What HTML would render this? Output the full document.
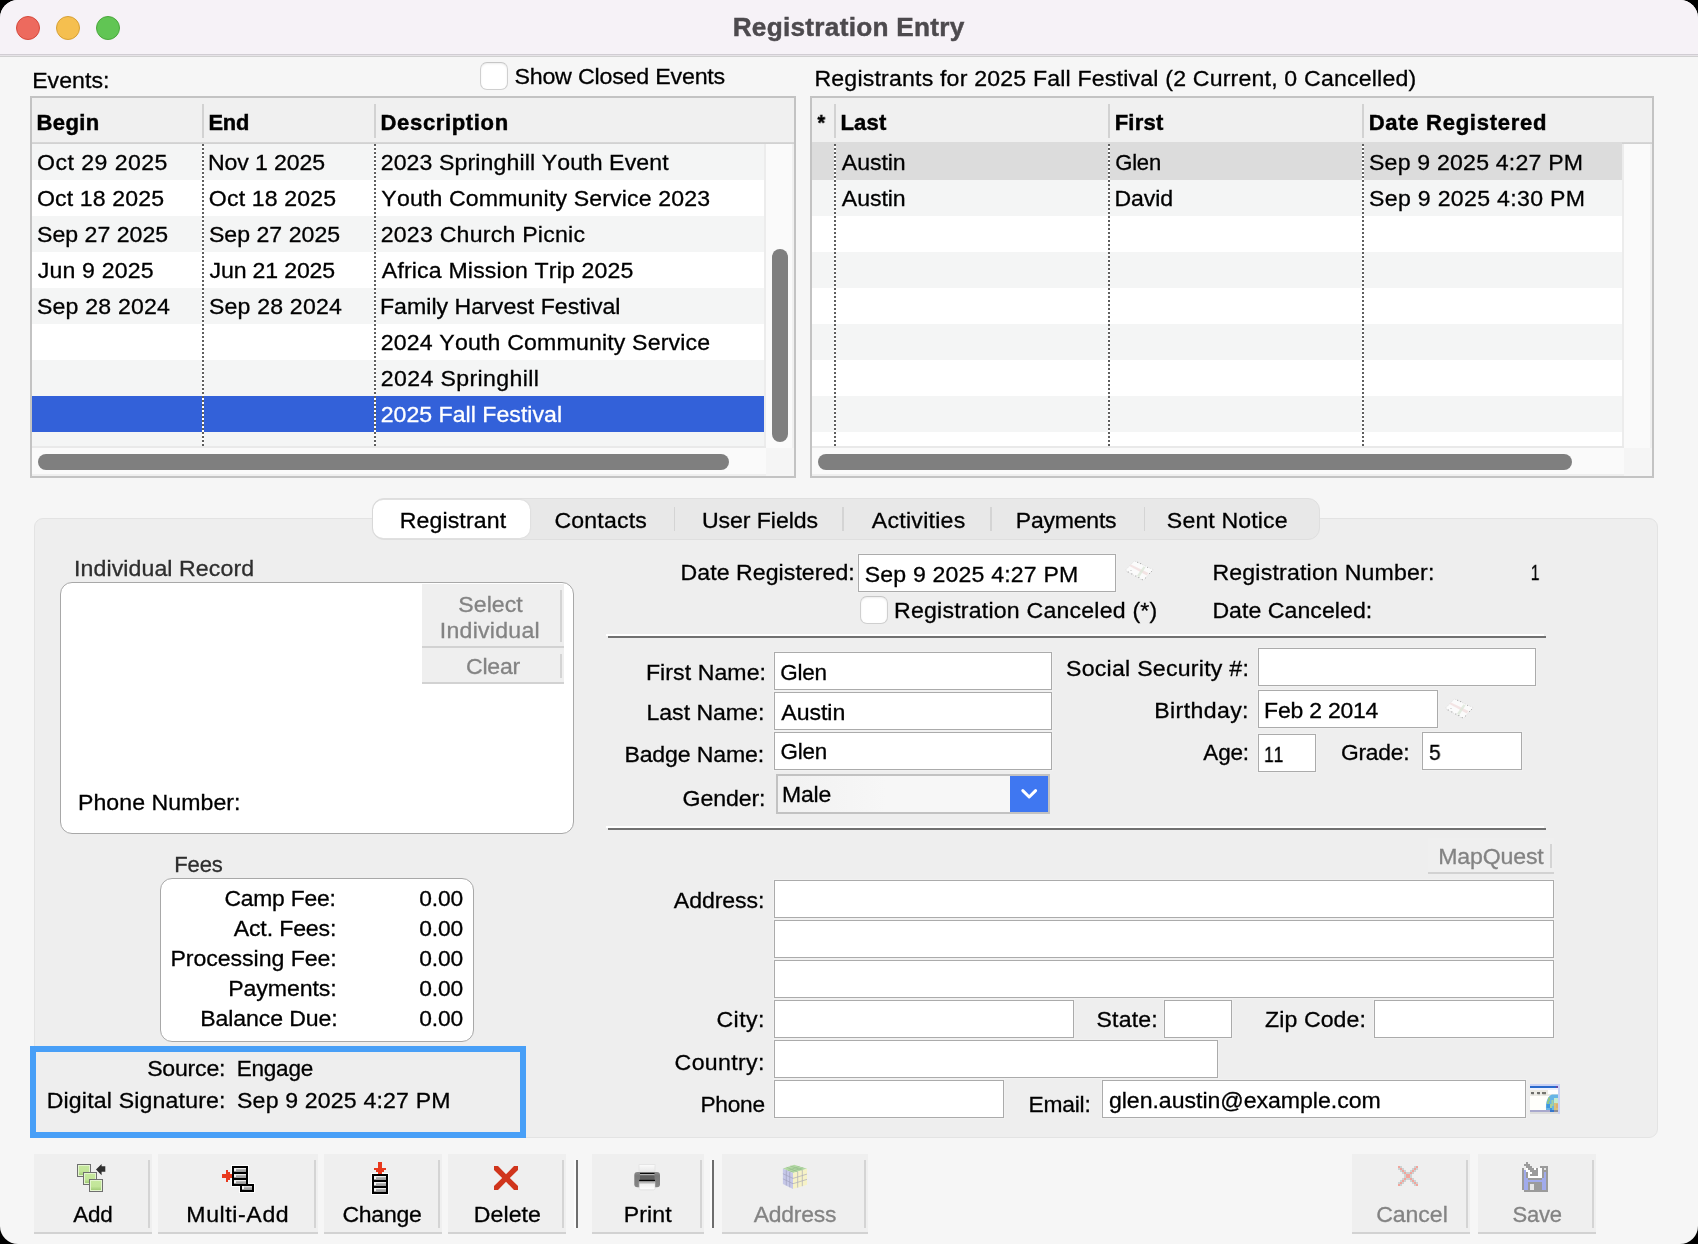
<!DOCTYPE html><html><head><meta charset="utf-8"><title>Registration Entry</title><style>
html,body{margin:0;padding:0;background:#000;}
body{width:1698px;height:1244px;overflow:hidden;position:relative;font-family:"Liberation Sans", sans-serif;}
#win{position:absolute;left:0;top:0;width:1698px;height:1244px;background:#f6f6f6;border-radius:18px;overflow:hidden;}
#win div,#win span,#win svg{position:absolute;box-sizing:border-box;}
#win span{display:block;-webkit-text-stroke:0.3px;will-change:transform;white-space:pre;line-height:1;font-kerning:none;transform-origin:0 0;}

</style></head><body><div id="win">
<div style="left:0;top:0;width:1698px;height:54px;background:#f6f2f7;"></div>
<div style="left:0;top:54px;width:1698px;height:1px;background:#d1cdd3;"></div>
<div style="left:0;top:55px;width:1698px;height:1px;background:#e6e3e7;"></div>
<div style="left:0;top:56px;width:1698px;height:1px;background:#d0d0d0;"></div>
<div style="left:16px;top:16px;width:24px;height:24px;border-radius:50%;background:#ed6a5e;border:1px solid #d5493c;"></div>
<div style="left:56px;top:16px;width:24px;height:24px;border-radius:50%;background:#f5bf4f;border:1px solid #d6a035;"></div>
<div style="left:96px;top:16px;width:24px;height:24px;border-radius:50%;background:#61c554;border:1px solid #4aa73c;"></div>
<div style="left:30px;top:96px;width:766px;height:382px;background:#fff;border:2px solid #c3c3c3;"></div>
<div style="left:32px;top:98px;width:762px;height:44px;background:#f0f0f0;"></div>
<div style="left:32px;top:142px;width:762px;height:2px;background:linear-gradient(to bottom,#d9d9d9,#cfcfcf);"></div>
<div style="left:32px;top:144px;width:732px;height:36px;background:#f4f5f5;"></div>
<div style="left:32px;top:216px;width:732px;height:36px;background:#f4f5f5;"></div>
<div style="left:32px;top:288px;width:732px;height:36px;background:#f4f5f5;"></div>
<div style="left:32px;top:360px;width:732px;height:36px;background:#f4f5f5;"></div>
<div style="left:32px;top:396px;width:732px;height:36px;background:#3361d9;"></div>
<div style="left:32px;top:432px;width:732px;height:14px;background:#f4f5f5;"></div>
<div style="left:764px;top:144px;width:30px;height:304px;background:#fafafa;border-left:2px solid #ececec;border-right:2px solid #f0f0f0;"></div>
<div style="left:32px;top:446px;width:734px;height:30px;background:#fafafa;border-top:2px solid #e9e9e9;border-bottom:2px solid #efefef;"></div>
<div style="left:766px;top:448px;width:28px;height:28px;background:#f5f5f5;"></div>
<div style="left:202px;top:104px;width:2px;height:34px;background:#d2d2d2;"></div>
<div style="left:202px;top:144px;width:2px;height:302px;background:repeating-linear-gradient(to bottom,#5e5e5e 0 2px,#fff 2px 4px);"></div>
<div style="left:374px;top:104px;width:2px;height:34px;background:#d2d2d2;"></div>
<div style="left:374px;top:144px;width:2px;height:302px;background:repeating-linear-gradient(to bottom,#5e5e5e 0 2px,#fff 2px 4px);"></div>
<div style="left:38px;top:454px;width:691px;height:16px;border-radius:8px;background:#7f7f7f;"></div>
<div style="left:772px;top:249px;width:16px;height:193px;border-radius:8px;background:#7f7f7f;"></div>
<div style="left:810px;top:96px;width:844px;height:382px;background:#fff;border:2px solid #c3c3c3;"></div>
<div style="left:812px;top:98px;width:840px;height:44px;background:#f0f0f0;"></div>
<div style="left:812px;top:142px;width:840px;height:2px;background:linear-gradient(to bottom,#d9d9d9,#cfcfcf);"></div>
<div style="left:812px;top:142px;width:810px;height:38px;background:#dcdcdc;"></div>
<div style="left:812px;top:180px;width:810px;height:36px;background:#f4f5f5;"></div>
<div style="left:812px;top:252px;width:810px;height:36px;background:#f4f5f5;"></div>
<div style="left:812px;top:324px;width:810px;height:36px;background:#f4f5f5;"></div>
<div style="left:812px;top:396px;width:810px;height:36px;background:#f4f5f5;"></div>
<div style="left:1622px;top:144px;width:30px;height:304px;background:#fafafa;border-left:2px solid #ececec;border-right:2px solid #f0f0f0;"></div>
<div style="left:812px;top:446px;width:812px;height:30px;background:#fafafa;border-top:2px solid #e9e9e9;border-bottom:2px solid #efefef;"></div>
<div style="left:1624px;top:448px;width:28px;height:28px;background:#f5f5f5;"></div>
<div style="left:834px;top:104px;width:2px;height:34px;background:#d2d2d2;"></div>
<div style="left:834px;top:144px;width:2px;height:302px;background:repeating-linear-gradient(to bottom,#5e5e5e 0 2px,#fff 2px 4px);"></div>
<div style="left:1108px;top:104px;width:2px;height:34px;background:#d2d2d2;"></div>
<div style="left:1108px;top:144px;width:2px;height:302px;background:repeating-linear-gradient(to bottom,#5e5e5e 0 2px,#fff 2px 4px);"></div>
<div style="left:1362px;top:104px;width:2px;height:34px;background:#d2d2d2;"></div>
<div style="left:1362px;top:144px;width:2px;height:302px;background:repeating-linear-gradient(to bottom,#5e5e5e 0 2px,#fff 2px 4px);"></div>
<div style="left:818px;top:454px;width:754px;height:16px;border-radius:8px;background:#7f7f7f;"></div>
<div style="left:34px;top:518px;width:1624px;height:620px;background:#eeeeee;border:1px solid #e3e3e3;border-radius:9px;"></div>
<div style="left:371.5px;top:498px;width:948.5px;height:42px;background:#e8e8e8;border:1px solid #dfdfdf;border-radius:12px;"></div>
<div style="left:372.5px;top:500px;width:157.5px;height:38px;background:#fff;border-radius:10px;box-shadow:0 0 2px rgba(0,0,0,.12);"></div>
<div style="left:673.5px;top:507px;width:1.5px;height:24px;background:#d4d4d4;"></div>
<div style="left:842px;top:507px;width:1.5px;height:24px;background:#d4d4d4;"></div>
<div style="left:990px;top:507px;width:1.5px;height:24px;background:#d4d4d4;"></div>
<div style="left:1143.5px;top:507px;width:1.5px;height:24px;background:#d4d4d4;"></div>
<div style="left:60px;top:582px;width:514px;height:252px;background:#fff;border:1px solid #a8a8a8;border-radius:12px;"></div>
<div style="left:422px;top:584px;width:142px;height:64px;background:#efefef;border-bottom:2px solid #d2d2d2;"></div>
<div style="left:560px;top:590px;width:2px;height:52px;background:#d4d4d4;"></div>
<div style="left:422px;top:648px;width:142px;height:36px;background:#efefef;border-bottom:2px solid #d2d2d2;"></div>
<div style="left:560px;top:654px;width:2px;height:24px;background:#d4d4d4;"></div>
<div style="left:160px;top:878px;width:314px;height:164px;background:#fff;border:1px solid #a8a8a8;border-radius:12px;"></div>
<div style="left:30px;top:1046px;width:496px;height:92px;border:6px solid #489ff7;background:#eeeeee;"></div>
<div style="left:858px;top:554px;width:258px;height:38px;background:#fff;border:1px solid #ababab;box-shadow:0 0 0 1px rgba(255,255,255,.22);"></div>
<div style="left:860px;top:596px;width:28px;height:28px;border-radius:7px;background:#fff;border:1px solid #cfcfcf;border-top-color:#c6c6c6;box-shadow:inset 0 1px 2px rgba(0,0,0,.08);"></div>
<div style="left:480px;top:62px;width:28px;height:28px;border-radius:7px;background:#fff;border:1px solid #cfcfcf;border-top-color:#c6c6c6;box-shadow:inset 0 1px 2px rgba(0,0,0,.08);"></div>
<div style="left:606px;top:634px;width:938px;height:2px;background:#fff;"></div>
<div style="left:608px;top:636px;width:938px;height:2px;background:#707070;"></div>
<div style="left:606px;top:826px;width:938px;height:2px;background:#fff;"></div>
<div style="left:608px;top:828px;width:938px;height:2px;background:#707070;"></div>
<div style="left:774px;top:652px;width:278px;height:38px;background:#fff;border:1px solid #ababab;box-shadow:0 0 0 1px rgba(255,255,255,.22);"></div>
<div style="left:774px;top:692px;width:278px;height:38px;background:#fff;border:1px solid #ababab;box-shadow:0 0 0 1px rgba(255,255,255,.22);"></div>
<div style="left:774px;top:732px;width:278px;height:38px;background:#fff;border:1px solid #ababab;box-shadow:0 0 0 1px rgba(255,255,255,.22);"></div>
<div style="left:776px;top:774px;width:274px;height:40px;background:linear-gradient(to right,#f1f1f1,#f7f7f7 40%);border:2px solid #c2c2c2;"></div>
<div style="left:1010px;top:776px;width:38px;height:36px;background:#3f77f1;"></div>
<svg style="left:1010px;top:776px;" width="38" height="36" viewBox="0 0 38 36"><path d="M12.8 14.6 L19.2 21 L25.6 14.6" fill="none" stroke="#fff" stroke-width="3" stroke-linecap="round" stroke-linejoin="round"/></svg>
<div style="left:1258px;top:648px;width:278px;height:38px;background:#fff;border:1px solid #ababab;box-shadow:0 0 0 1px rgba(255,255,255,.22);"></div>
<div style="left:1258px;top:690px;width:180px;height:38px;background:#fff;border:1px solid #ababab;box-shadow:0 0 0 1px rgba(255,255,255,.22);"></div>
<div style="left:1258px;top:734px;width:58px;height:38px;background:#fff;border:1px solid #ababab;box-shadow:0 0 0 1px rgba(255,255,255,.22);"></div>
<div style="left:1422px;top:732px;width:100px;height:38px;background:#fff;border:1px solid #ababab;box-shadow:0 0 0 1px rgba(255,255,255,.22);"></div>
<div style="left:1428px;top:838px;width:126px;height:36px;background:#efefef;border-bottom:2px solid #d2d2d2;"></div>
<div style="left:1550px;top:844px;width:2px;height:24px;background:#d4d4d4;"></div>
<div style="left:774px;top:880px;width:780px;height:38px;background:#fff;border:1px solid #ababab;box-shadow:0 0 0 1px rgba(255,255,255,.22);"></div>
<div style="left:774px;top:920px;width:780px;height:38px;background:#fff;border:1px solid #ababab;box-shadow:0 0 0 1px rgba(255,255,255,.22);"></div>
<div style="left:774px;top:960px;width:780px;height:38px;background:#fff;border:1px solid #ababab;box-shadow:0 0 0 1px rgba(255,255,255,.22);"></div>
<div style="left:774px;top:1000px;width:300px;height:38px;background:#fff;border:1px solid #ababab;box-shadow:0 0 0 1px rgba(255,255,255,.22);"></div>
<div style="left:1164px;top:1000px;width:68px;height:38px;background:#fff;border:1px solid #ababab;box-shadow:0 0 0 1px rgba(255,255,255,.22);"></div>
<div style="left:1374px;top:1000px;width:180px;height:38px;background:#fff;border:1px solid #ababab;box-shadow:0 0 0 1px rgba(255,255,255,.22);"></div>
<div style="left:774px;top:1040px;width:444px;height:38px;background:#fff;border:1px solid #ababab;box-shadow:0 0 0 1px rgba(255,255,255,.22);"></div>
<div style="left:774px;top:1080px;width:230px;height:38px;background:#fff;border:1px solid #ababab;box-shadow:0 0 0 1px rgba(255,255,255,.22);"></div>
<div style="left:1102px;top:1080px;width:424px;height:38px;background:#fff;border:1px solid #ababab;box-shadow:0 0 0 1px rgba(255,255,255,.22);"></div>
<div style="left:34px;top:1154px;width:118px;height:80px;background:#efefef;border-bottom:2px solid #d2d2d2;"></div>
<div style="left:148px;top:1160px;width:2px;height:68px;background:#d4d4d4;"></div>
<div style="left:158px;top:1154px;width:160px;height:80px;background:#efefef;border-bottom:2px solid #d2d2d2;"></div>
<div style="left:314px;top:1160px;width:2px;height:68px;background:#d4d4d4;"></div>
<div style="left:324px;top:1154px;width:118px;height:80px;background:#efefef;border-bottom:2px solid #d2d2d2;"></div>
<div style="left:438px;top:1160px;width:2px;height:68px;background:#d4d4d4;"></div>
<div style="left:448px;top:1154px;width:118px;height:80px;background:#efefef;border-bottom:2px solid #d2d2d2;"></div>
<div style="left:562px;top:1160px;width:2px;height:68px;background:#d4d4d4;"></div>
<div style="left:592px;top:1154px;width:112px;height:80px;background:#efefef;border-bottom:2px solid #d2d2d2;"></div>
<div style="left:700px;top:1160px;width:2px;height:68px;background:#d4d4d4;"></div>
<div style="left:722px;top:1154px;width:146px;height:80px;background:#efefef;border-bottom:2px solid #d2d2d2;"></div>
<div style="left:864px;top:1160px;width:2px;height:68px;background:#d4d4d4;"></div>
<div style="left:1352px;top:1154px;width:118px;height:80px;background:#efefef;border-bottom:2px solid #d2d2d2;"></div>
<div style="left:1466px;top:1160px;width:2px;height:68px;background:#d4d4d4;"></div>
<div style="left:1478px;top:1154px;width:118px;height:80px;background:#efefef;border-bottom:2px solid #d2d2d2;"></div>
<div style="left:1592px;top:1160px;width:2px;height:68px;background:#d4d4d4;"></div>
<div style="left:576px;top:1160px;width:2px;height:68px;background:#6e6e6e;"></div>
<div style="left:574px;top:1160px;width:2px;height:68px;background:#fdfdfd;"></div>
<div style="left:712px;top:1160px;width:2px;height:68px;background:#6e6e6e;"></div>
<div style="left:710px;top:1160px;width:2px;height:68px;background:#fdfdfd;"></div>
<svg style="left:74px;top:1160px;" width="34" height="34" viewBox="0 0 34 34" ><defs><linearGradient id="gq" x1="0" y1="0" x2="0" y2="1"><stop offset="0" stop-color="#c6e89e"/><stop offset="0.6" stop-color="#c2e598"/><stop offset="1" stop-color="#a3cd78"/></linearGradient></defs><rect x="3" y="4" width="14" height="13" fill="#6f6f6f"/><rect x="4" y="5" width="12" height="11" fill="#e4f5cf"/><rect x="5" y="6" width="10" height="9" fill="url(#gq)"/><rect x="9" y="12" width="14" height="13" fill="#6f6f6f"/><rect x="10" y="13" width="12" height="11" fill="#e4f5cf"/><rect x="11" y="14" width="10" height="9" fill="url(#gq)"/><rect x="15" y="19" width="14" height="13" fill="#6f6f6f"/><rect x="16" y="20" width="12" height="11" fill="#e4f5cf"/><rect x="17" y="21" width="10" height="9" fill="url(#gq)"/><path d="M22 9.4 L27.6 4 L27.6 6.2 L31.3 6.2 L31.3 11.8 L27.6 11.8 L27.6 15.2 Z" fill="#303030"/></svg>
<svg style="left:220px;top:1164px;" width="36" height="30" viewBox="0 0 36 30" shape-rendering="crispEdges"><defs><linearGradient id="gc" x1="0" y1="0" x2="0" y2="1"><stop offset="0" stop-color="#e6e6e6"/><stop offset="0.5" stop-color="#a8a8a8"/><stop offset="1" stop-color="#9a9a9a"/></linearGradient></defs><rect x="11" y="1" width="18" height="22" fill="#fff"/><rect x="19" y="19" width="16" height="10" fill="#fff"/><rect x="12" y="2" width="16" height="20" fill="#000"/><rect x="14" y="4" width="12" height="4" fill="url(#gc)"/><rect x="14" y="4" width="2" height="3" fill="#f4f4f4"/><rect x="14" y="4" width="12" height="1" fill="#eeeeee"/><rect x="14" y="10" width="12" height="4" fill="url(#gc)"/><rect x="14" y="10" width="2" height="3" fill="#f4f4f4"/><rect x="14" y="10" width="12" height="1" fill="#eeeeee"/><rect x="14" y="16" width="12" height="4" fill="url(#gc)"/><rect x="14" y="16" width="2" height="3" fill="#f4f4f4"/><rect x="14" y="16" width="12" height="1" fill="#eeeeee"/><rect x="20" y="20" width="14" height="8" fill="#000"/><rect x="22" y="22" width="10" height="4" fill="url(#gc)"/><rect x="22" y="22" width="2" height="3" fill="#f4f4f4"/><path d="M2 10h4v-4h2v2h2v2h2v4h-2v2h-2v2h-2v-4h-4z" fill="#e8391d"/></svg>
<svg style="left:370px;top:1160px;" width="20" height="36" viewBox="0 0 20 36" shape-rendering="crispEdges"><defs><linearGradient id="gc2" x1="0" y1="0" x2="0" y2="1"><stop offset="0" stop-color="#e6e6e6"/><stop offset="0.5" stop-color="#a8a8a8"/><stop offset="1" stop-color="#9a9a9a"/></linearGradient></defs><rect x="1" y="13" width="18" height="22" fill="#fff"/><rect x="2" y="14" width="16" height="20" fill="#000"/><rect x="4" y="16" width="12" height="4" fill="url(#gc2)"/><rect x="4" y="16" width="2" height="3" fill="#f4f4f4"/><rect x="4" y="16" width="12" height="1" fill="#eeeeee"/><rect x="4" y="22" width="12" height="4" fill="url(#gc2)"/><rect x="4" y="22" width="2" height="3" fill="#f4f4f4"/><rect x="4" y="22" width="12" height="1" fill="#eeeeee"/><rect x="4" y="28" width="12" height="4" fill="url(#gc2)"/><rect x="4" y="28" width="2" height="3" fill="#f4f4f4"/><rect x="4" y="28" width="12" height="1" fill="#eeeeee"/><path d="M8 2h4v6h4v2h-2v2h-2v2h-4v-2h-2v-2h-2v-2h4z" fill="#e8391d"/></svg>
<svg style="left:494px;top:1166px;" width="24" height="24" viewBox="0 0 24 24" ><path d="M0 0H4L12 8.3L20 0H24V4L15.8 12L24 20V24H20L12 15.8L4 24H0V20L8.2 12L0 4Z" fill="#d0351c"/></svg>
<svg style="left:632px;top:1162px;" width="30" height="30" viewBox="0 0 30 30" ><defs><linearGradient id="pb" x1="0" y1="0" x2="0" y2="1"><stop offset="0" stop-color="#8d8d8d"/><stop offset="0.25" stop-color="#7a7a7a"/><stop offset="1" stop-color="#858585"/></linearGradient><linearGradient id="pp" x1="0" y1="0" x2="0" y2="1"><stop offset="0" stop-color="#9a9a9a"/><stop offset="0.35" stop-color="#f2f2f2"/><stop offset="1" stop-color="#ffffff"/></linearGradient><linearGradient id="pt" x1="0" y1="0" x2="0" y2="1"><stop offset="0" stop-color="#fbfbfb"/><stop offset="1" stop-color="#e4e4e4"/></linearGradient></defs><rect x="7" y="2.7" width="16" height="8.3" fill="url(#pt)" stroke="#dcdcdc" stroke-width="0.6"/><rect x="2.3" y="10" width="25.7" height="15.2" rx="3" fill="url(#pb)"/><rect x="8" y="10.9" width="14.5" height="1.4" fill="#0a0a0a"/><rect x="8" y="12.3" width="14.5" height="1" fill="#d8d8d8"/><rect x="8" y="13.3" width="14.5" height="4.6" fill="#5f5f5f"/><rect x="7.2" y="17.8" width="15.8" height="1.8" fill="#050505"/><path d="M7.2 19.6H23V26.3Q23 27.8 21.5 27.8H8.7Q7.2 27.8 7.2 26.3Z" fill="url(#pp)" stroke="#d0d0d0" stroke-width="0.5"/></svg>
<svg style="left:780px;top:1162px;" width="30" height="30" viewBox="0 0 30 30" ><polygon points="2.9,6.6 14.2,2.7 27,6.8 13,11.1" fill="#b3d9a4"/><polygon points="2.9,6.6 13,11.1 13,27 2.9,21.9" fill="#c6c8e8"/><polygon points="13,11.1 27,6.8 27,22.7 13,27" fill="#f6f2c6"/><g stroke="#9a9ab4" stroke-width="0.7" opacity="0.8" fill="none"><path d="M6.3 8.1V23.6M9.7 9.6V25.3M2.9 11.7L13 16.4M2.9 16.8L13 21.7"/><path d="M17.7 9.7V25.6M22.3 8.2V24.2M13 16.4L27 12.1M13 21.7L27 17.4"/><path d="M6.6 5.3L17.7 9.7M10.4 4L22.3 8.2M7.6 8.7L19.5 4.4M10.3 9.9L23.2 5.6" stroke="#8fb686"/></g></svg>
<svg style="left:1398px;top:1166px;" width="20" height="20" viewBox="0 0 20 20" shape-rendering="crispEdges"><rect x="0" y="2" width="2" height="2" fill="#cdd3d3"/><rect x="0" y="16" width="2" height="2" fill="#cdd3d3"/><rect x="2" y="0" width="2" height="2" fill="#cdd3d3"/><rect x="2" y="4" width="2" height="2" fill="#cdd3d3"/><rect x="2" y="14" width="2" height="2" fill="#cdd3d3"/><rect x="2" y="18" width="2" height="2" fill="#cdd3d3"/><rect x="4" y="2" width="2" height="2" fill="#cdd3d3"/><rect x="4" y="6" width="2" height="2" fill="#cdd3d3"/><rect x="4" y="12" width="2" height="2" fill="#cdd3d3"/><rect x="4" y="16" width="2" height="2" fill="#cdd3d3"/><rect x="6" y="4" width="2" height="2" fill="#cdd3d3"/><rect x="6" y="8" width="2" height="2" fill="#cdd3d3"/><rect x="6" y="10" width="2" height="2" fill="#cdd3d3"/><rect x="6" y="14" width="2" height="2" fill="#cdd3d3"/><rect x="8" y="6" width="2" height="2" fill="#cdd3d3"/><rect x="8" y="12" width="2" height="2" fill="#cdd3d3"/><rect x="10" y="6" width="2" height="2" fill="#cdd3d3"/><rect x="10" y="12" width="2" height="2" fill="#cdd3d3"/><rect x="12" y="4" width="2" height="2" fill="#cdd3d3"/><rect x="12" y="8" width="2" height="2" fill="#cdd3d3"/><rect x="12" y="10" width="2" height="2" fill="#cdd3d3"/><rect x="12" y="14" width="2" height="2" fill="#cdd3d3"/><rect x="14" y="2" width="2" height="2" fill="#cdd3d3"/><rect x="14" y="6" width="2" height="2" fill="#cdd3d3"/><rect x="14" y="12" width="2" height="2" fill="#cdd3d3"/><rect x="14" y="16" width="2" height="2" fill="#cdd3d3"/><rect x="16" y="0" width="2" height="2" fill="#cdd3d3"/><rect x="16" y="4" width="2" height="2" fill="#cdd3d3"/><rect x="16" y="14" width="2" height="2" fill="#cdd3d3"/><rect x="16" y="18" width="2" height="2" fill="#cdd3d3"/><rect x="18" y="2" width="2" height="2" fill="#cdd3d3"/><rect x="18" y="16" width="2" height="2" fill="#cdd3d3"/><rect x="0" y="0" width="2" height="2" fill="#f1a59c"/><rect x="0" y="18" width="2" height="2" fill="#f1a59c"/><rect x="2" y="2" width="2" height="2" fill="#f1a59c"/><rect x="2" y="16" width="2" height="2" fill="#f1a59c"/><rect x="4" y="4" width="2" height="2" fill="#f1a59c"/><rect x="4" y="14" width="2" height="2" fill="#f1a59c"/><rect x="6" y="6" width="2" height="2" fill="#f1a59c"/><rect x="6" y="12" width="2" height="2" fill="#f1a59c"/><rect x="8" y="8" width="2" height="2" fill="#f1a59c"/><rect x="8" y="10" width="2" height="2" fill="#f1a59c"/><rect x="10" y="8" width="2" height="2" fill="#f1a59c"/><rect x="10" y="10" width="2" height="2" fill="#f1a59c"/><rect x="12" y="6" width="2" height="2" fill="#f1a59c"/><rect x="12" y="12" width="2" height="2" fill="#f1a59c"/><rect x="14" y="4" width="2" height="2" fill="#f1a59c"/><rect x="14" y="14" width="2" height="2" fill="#f1a59c"/><rect x="16" y="2" width="2" height="2" fill="#f1a59c"/><rect x="16" y="16" width="2" height="2" fill="#f1a59c"/><rect x="18" y="0" width="2" height="2" fill="#f1a59c"/><rect x="18" y="18" width="2" height="2" fill="#f1a59c"/></svg>
<svg style="left:1520px;top:1160px;" width="30" height="32" viewBox="0 0 30 32" shape-rendering="crispEdges"><rect x="6" y="2" width="2" height="2" fill="#9b9b9b"/><rect x="4" y="4" width="2" height="2" fill="#9b9b9b"/><rect x="6" y="4" width="2" height="2" fill="#9b9b9b"/><rect x="8" y="4" width="2" height="2" fill="#9b9b9b"/><rect x="6" y="6" width="2" height="2" fill="#9b9b9b"/><rect x="8" y="6" width="2" height="2" fill="#9b9b9b"/><rect x="10" y="6" width="2" height="2" fill="#9b9b9b"/><rect x="20" y="6" width="2" height="2" fill="#9b9b9b"/><rect x="22" y="6" width="2" height="2" fill="#9b9b9b"/><rect x="24" y="6" width="2" height="2" fill="#9b9b9b"/><rect x="26" y="6" width="2" height="2" fill="#9b9b9b"/><rect x="2" y="8" width="2" height="2" fill="#9b9b9b"/><rect x="6" y="8" width="2" height="2" fill="#ffffff"/><rect x="8" y="8" width="2" height="2" fill="#9b9b9b"/><rect x="10" y="8" width="2" height="2" fill="#9b9b9b"/><rect x="12" y="8" width="2" height="2" fill="#9b9b9b"/><rect x="14" y="8" width="2" height="2" fill="#ffffff"/><rect x="16" y="8" width="2" height="2" fill="#9b9b9b"/><rect x="18" y="8" width="2" height="2" fill="#ffffff"/><rect x="20" y="8" width="2" height="2" fill="#ffffff"/><rect x="22" y="8" width="2" height="2" fill="#9b9b9b"/><rect x="24" y="8" width="2" height="2" fill="#e6e6e6"/><rect x="26" y="8" width="2" height="2" fill="#9b9b9b"/><rect x="2" y="10" width="2" height="2" fill="#9b9b9b"/><rect x="4" y="10" width="2" height="2" fill="#a1abec"/><rect x="6" y="10" width="2" height="2" fill="#ffffff"/><rect x="8" y="10" width="2" height="2" fill="#ffffff"/><rect x="10" y="10" width="2" height="2" fill="#9b9b9b"/><rect x="12" y="10" width="2" height="2" fill="#9b9b9b"/><rect x="14" y="10" width="2" height="2" fill="#9b9b9b"/><rect x="16" y="10" width="2" height="2" fill="#9b9b9b"/><rect x="18" y="10" width="2" height="2" fill="#ffffff"/><rect x="20" y="10" width="2" height="2" fill="#ffffff"/><rect x="22" y="10" width="2" height="2" fill="#9b9b9b"/><rect x="24" y="10" width="2" height="2" fill="#9b9b9b"/><rect x="26" y="10" width="2" height="2" fill="#9b9b9b"/><rect x="2" y="12" width="2" height="2" fill="#9b9b9b"/><rect x="4" y="12" width="2" height="2" fill="#a1abec"/><rect x="6" y="12" width="2" height="2" fill="#9b9b9b"/><rect x="8" y="12" width="2" height="2" fill="#ffffff"/><rect x="10" y="12" width="2" height="2" fill="#ffffff"/><rect x="12" y="12" width="2" height="2" fill="#9b9b9b"/><rect x="14" y="12" width="2" height="2" fill="#9b9b9b"/><rect x="16" y="12" width="2" height="2" fill="#9b9b9b"/><rect x="18" y="12" width="2" height="2" fill="#ffffff"/><rect x="20" y="12" width="2" height="2" fill="#ffffff"/><rect x="22" y="12" width="2" height="2" fill="#9b9b9b"/><rect x="24" y="12" width="2" height="2" fill="#a1abec"/><rect x="26" y="12" width="2" height="2" fill="#9b9b9b"/><rect x="2" y="14" width="2" height="2" fill="#9b9b9b"/><rect x="4" y="14" width="2" height="2" fill="#a1abec"/><rect x="6" y="14" width="2" height="2" fill="#9b9b9b"/><rect x="8" y="14" width="2" height="2" fill="#ffffff"/><rect x="10" y="14" width="2" height="2" fill="#9b9b9b"/><rect x="12" y="14" width="2" height="2" fill="#9b9b9b"/><rect x="14" y="14" width="2" height="2" fill="#9b9b9b"/><rect x="16" y="14" width="2" height="2" fill="#9b9b9b"/><rect x="18" y="14" width="2" height="2" fill="#ffffff"/><rect x="20" y="14" width="2" height="2" fill="#ffffff"/><rect x="22" y="14" width="2" height="2" fill="#9b9b9b"/><rect x="24" y="14" width="2" height="2" fill="#a1abec"/><rect x="26" y="14" width="2" height="2" fill="#9b9b9b"/><rect x="2" y="16" width="2" height="2" fill="#9b9b9b"/><rect x="4" y="16" width="2" height="2" fill="#a1abec"/><rect x="6" y="16" width="2" height="2" fill="#9b9b9b"/><rect x="8" y="16" width="2" height="2" fill="#ffffff"/><rect x="10" y="16" width="2" height="2" fill="#ffffff"/><rect x="12" y="16" width="2" height="2" fill="#ffffff"/><rect x="14" y="16" width="2" height="2" fill="#ffffff"/><rect x="16" y="16" width="2" height="2" fill="#ffffff"/><rect x="18" y="16" width="2" height="2" fill="#ffffff"/><rect x="20" y="16" width="2" height="2" fill="#ffffff"/><rect x="22" y="16" width="2" height="2" fill="#9b9b9b"/><rect x="24" y="16" width="2" height="2" fill="#a1abec"/><rect x="26" y="16" width="2" height="2" fill="#9b9b9b"/><rect x="2" y="18" width="2" height="2" fill="#9b9b9b"/><rect x="4" y="18" width="2" height="2" fill="#a1abec"/><rect x="6" y="18" width="2" height="2" fill="#a1abec"/><rect x="8" y="18" width="2" height="2" fill="#9b9b9b"/><rect x="10" y="18" width="2" height="2" fill="#9b9b9b"/><rect x="12" y="18" width="2" height="2" fill="#9b9b9b"/><rect x="14" y="18" width="2" height="2" fill="#9b9b9b"/><rect x="16" y="18" width="2" height="2" fill="#9b9b9b"/><rect x="18" y="18" width="2" height="2" fill="#9b9b9b"/><rect x="20" y="18" width="2" height="2" fill="#9b9b9b"/><rect x="22" y="18" width="2" height="2" fill="#a1abec"/><rect x="24" y="18" width="2" height="2" fill="#a1abec"/><rect x="26" y="18" width="2" height="2" fill="#9b9b9b"/><rect x="2" y="20" width="2" height="2" fill="#9b9b9b"/><rect x="4" y="20" width="2" height="2" fill="#a1abec"/><rect x="6" y="20" width="2" height="2" fill="#a1abec"/><rect x="8" y="20" width="2" height="2" fill="#a1abec"/><rect x="10" y="20" width="2" height="2" fill="#a1abec"/><rect x="12" y="20" width="2" height="2" fill="#a1abec"/><rect x="14" y="20" width="2" height="2" fill="#a1abec"/><rect x="16" y="20" width="2" height="2" fill="#a1abec"/><rect x="18" y="20" width="2" height="2" fill="#a1abec"/><rect x="20" y="20" width="2" height="2" fill="#a1abec"/><rect x="22" y="20" width="2" height="2" fill="#a1abec"/><rect x="24" y="20" width="2" height="2" fill="#a1abec"/><rect x="26" y="20" width="2" height="2" fill="#9b9b9b"/><rect x="2" y="22" width="2" height="2" fill="#9b9b9b"/><rect x="4" y="22" width="2" height="2" fill="#a1abec"/><rect x="6" y="22" width="2" height="2" fill="#a1abec"/><rect x="8" y="22" width="2" height="2" fill="#9b9b9b"/><rect x="10" y="22" width="2" height="2" fill="#9b9b9b"/><rect x="12" y="22" width="2" height="2" fill="#9b9b9b"/><rect x="14" y="22" width="2" height="2" fill="#9b9b9b"/><rect x="16" y="22" width="2" height="2" fill="#9b9b9b"/><rect x="18" y="22" width="2" height="2" fill="#9b9b9b"/><rect x="20" y="22" width="2" height="2" fill="#9b9b9b"/><rect x="22" y="22" width="2" height="2" fill="#a1abec"/><rect x="24" y="22" width="2" height="2" fill="#a1abec"/><rect x="26" y="22" width="2" height="2" fill="#9b9b9b"/><rect x="2" y="24" width="2" height="2" fill="#9b9b9b"/><rect x="4" y="24" width="2" height="2" fill="#a1abec"/><rect x="6" y="24" width="2" height="2" fill="#a1abec"/><rect x="8" y="24" width="2" height="2" fill="#9b9b9b"/><rect x="10" y="24" width="2" height="2" fill="#e6e6e6"/><rect x="12" y="24" width="2" height="2" fill="#e6e6e6"/><rect x="14" y="24" width="2" height="2" fill="#9b9b9b"/><rect x="16" y="24" width="2" height="2" fill="#9b9b9b"/><rect x="18" y="24" width="2" height="2" fill="#9b9b9b"/><rect x="20" y="24" width="2" height="2" fill="#9b9b9b"/><rect x="22" y="24" width="2" height="2" fill="#a1abec"/><rect x="24" y="24" width="2" height="2" fill="#a1abec"/><rect x="26" y="24" width="2" height="2" fill="#9b9b9b"/><rect x="2" y="26" width="2" height="2" fill="#9b9b9b"/><rect x="4" y="26" width="2" height="2" fill="#a1abec"/><rect x="6" y="26" width="2" height="2" fill="#a1abec"/><rect x="8" y="26" width="2" height="2" fill="#9b9b9b"/><rect x="10" y="26" width="2" height="2" fill="#e6e6e6"/><rect x="12" y="26" width="2" height="2" fill="#e6e6e6"/><rect x="14" y="26" width="2" height="2" fill="#9b9b9b"/><rect x="16" y="26" width="2" height="2" fill="#9b9b9b"/><rect x="18" y="26" width="2" height="2" fill="#9b9b9b"/><rect x="20" y="26" width="2" height="2" fill="#9b9b9b"/><rect x="22" y="26" width="2" height="2" fill="#a1abec"/><rect x="24" y="26" width="2" height="2" fill="#a1abec"/><rect x="26" y="26" width="2" height="2" fill="#9b9b9b"/><rect x="2" y="28" width="2" height="2" fill="#9b9b9b"/><rect x="4" y="28" width="2" height="2" fill="#a1abec"/><rect x="6" y="28" width="2" height="2" fill="#a1abec"/><rect x="8" y="28" width="2" height="2" fill="#9b9b9b"/><rect x="10" y="28" width="2" height="2" fill="#e6e6e6"/><rect x="12" y="28" width="2" height="2" fill="#e6e6e6"/><rect x="14" y="28" width="2" height="2" fill="#9b9b9b"/><rect x="16" y="28" width="2" height="2" fill="#9b9b9b"/><rect x="18" y="28" width="2" height="2" fill="#9b9b9b"/><rect x="20" y="28" width="2" height="2" fill="#9b9b9b"/><rect x="22" y="28" width="2" height="2" fill="#a1abec"/><rect x="24" y="28" width="2" height="2" fill="#a1abec"/><rect x="26" y="28" width="2" height="2" fill="#9b9b9b"/><rect x="4" y="30" width="2" height="2" fill="#9b9b9b"/><rect x="6" y="30" width="2" height="2" fill="#9b9b9b"/><rect x="8" y="30" width="2" height="2" fill="#9b9b9b"/><rect x="10" y="30" width="2" height="2" fill="#9b9b9b"/><rect x="12" y="30" width="2" height="2" fill="#9b9b9b"/><rect x="14" y="30" width="2" height="2" fill="#9b9b9b"/><rect x="16" y="30" width="2" height="2" fill="#9b9b9b"/><rect x="18" y="30" width="2" height="2" fill="#9b9b9b"/><rect x="20" y="30" width="2" height="2" fill="#9b9b9b"/><rect x="22" y="30" width="2" height="2" fill="#9b9b9b"/><rect x="24" y="30" width="2" height="2" fill="#9b9b9b"/><rect x="26" y="30" width="2" height="2" fill="#9b9b9b"/></svg>
<svg style="left:1124.8px;top:560px;" width="30" height="22" viewBox="0 0 30 22" ><polygon points="0.3,10.3 9.3,0.9 28.2,9.6 18,20.8" fill="#fbfbfb" stroke="#d9d9d9" stroke-width="0.7" stroke-dasharray="1.5 1.2"/><polygon points="4.5,6 6,4.4 23.5,13 21.8,15.4" fill="#f1dede" opacity="0.8"/><polygon points="18.5,6.2 20.6,7.3 14.3,17.2 11.8,16" fill="#dde7da" opacity="0.8"/><g fill="#8c8c8c" opacity="0.55"><rect x="12" y="1.8" width="1.2" height="1"/><rect x="15" y="3" width="1.2" height="1"/><rect x="22" y="7" width="1" height="1"/><rect x="26" y="11" width="1" height="1"/><rect x="24" y="13" width="1" height="1"/><rect x="20" y="17.5" width="1" height="1"/><rect x="5.5" y="10" width="1" height="1"/><rect x="2.5" y="11.5" width="1.5" height="1"/><rect x="6" y="13.4" width="1.5" height="1"/><rect x="10" y="15.5" width="1.5" height="1"/><rect x="13" y="17" width="1.5" height="1"/><rect x="16.5" y="19" width="1.5" height="1"/></g></svg>
<svg style="left:1444.8px;top:698px;" width="30" height="22" viewBox="0 0 30 22" ><polygon points="0.3,10.3 9.3,0.9 28.2,9.6 18,20.8" fill="#fbfbfb" stroke="#d9d9d9" stroke-width="0.7" stroke-dasharray="1.5 1.2"/><polygon points="4.5,6 6,4.4 23.5,13 21.8,15.4" fill="#f1dede" opacity="0.8"/><polygon points="18.5,6.2 20.6,7.3 14.3,17.2 11.8,16" fill="#dde7da" opacity="0.8"/><g fill="#8c8c8c" opacity="0.55"><rect x="12" y="1.8" width="1.2" height="1"/><rect x="15" y="3" width="1.2" height="1"/><rect x="22" y="7" width="1" height="1"/><rect x="26" y="11" width="1" height="1"/><rect x="24" y="13" width="1" height="1"/><rect x="20" y="17.5" width="1" height="1"/><rect x="5.5" y="10" width="1" height="1"/><rect x="2.5" y="11.5" width="1.5" height="1"/><rect x="6" y="13.4" width="1.5" height="1"/><rect x="10" y="15.5" width="1.5" height="1"/><rect x="13" y="17" width="1.5" height="1"/><rect x="16.5" y="19" width="1.5" height="1"/></g></svg>
<svg style="left:1530px;top:1084px;" width="30" height="30" viewBox="0 0 30 30" ><rect x="0" y="0" width="30" height="30" fill="#c9d1f5"/><rect x="0" y="2" width="28" height="2" fill="#2969cc"/><rect x="26" y="2" width="2" height="2" fill="#6a4aa8"/><rect x="0" y="4" width="28" height="2" fill="#eef1fb"/><rect x="0" y="6" width="28" height="6" fill="#ecebe4"/><rect x="18" y="6" width="10" height="4" fill="#ffffff"/><rect x="1" y="8" width="3" height="2" fill="#6e6e6a"/><rect x="7" y="8" width="3" height="2" fill="#6e6e6a"/><rect x="12" y="8" width="4" height="2" fill="#76766f"/><rect x="1.5" y="10.3" width="2.5" height="0.8" fill="#bdbdb8"/><rect x="7.5" y="10.3" width="2.5" height="0.8" fill="#bdbdb8"/><rect x="12.5" y="10.3" width="3.5" height="0.8" fill="#bdbdb8"/><rect x="0" y="12" width="28" height="14" fill="#fffffb"/><path d="M28 10.5H22C17.5 12.5 15.5 17 16 26H28Z" fill="#67b5e6"/><path d="M18 13.5h2v4h-2zM17 17h2v4h-2z" fill="#8fc686"/><path d="M16.5 20h3.5v4h-3.5z" fill="#3f97dd"/><path d="M20 20h2v6h-2z M21.5 16h2v6h-2z" fill="#a6d0a0"/><path d="M24 14h4v5h-4z" fill="#c6ead0"/><path d="M24 19h4v7h-4z" fill="#d9c27c"/><path d="M26 20h2v4h-2z" fill="#dfae72"/><path d="M20 24h2v2h-2z" fill="#3f97dd"/><rect x="0" y="26" width="28" height="2" fill="#a9a9cd"/><rect x="20" y="26" width="4" height="2" fill="#3576cc"/><rect x="24" y="26" width="4" height="2" fill="#8e8e96"/><rect x="0" y="28" width="28" height="2" fill="#dcdcdc"/></svg>
<span style="left:732.00px;top:15.00px;font-size:25.2px;letter-spacing:0.265px;text-indent:0.64px;font-weight:700;-webkit-text-stroke:0.45px;color:#4d4a4e;transform:scaleX(1.04);">Registration Entry</span>
<span style="left:32.00px;top:70.00px;font-size:22px;letter-spacing:0.042px;text-indent:0.15px;transform:scaleX(1.05);">Events:</span>
<span style="left:514.00px;top:66.00px;font-size:22.6px;letter-spacing:-0.200px;text-indent:0.38px;transform:scaleX(1.028095657629388);">Show Closed Events</span>
<span style="left:36.00px;top:112.00px;font-size:21.2px;letter-spacing:0.398px;text-indent:0.38px;font-weight:700;-webkit-text-stroke:0.45px;transform:scaleX(1.04);">Begin</span>
<span style="left:208.00px;top:112.00px;font-size:21.2px;letter-spacing:-0.200px;text-indent:0.44px;font-weight:700;-webkit-text-stroke:0.45px;transform:scaleX(1.0308433223719116);">End</span>
<span style="left:380.00px;top:112.00px;font-size:21.2px;letter-spacing:0.617px;text-indent:0.52px;font-weight:700;-webkit-text-stroke:0.45px;transform:scaleX(1.04);">Description</span>
<span style="left:36.00px;top:152.00px;font-size:22px;letter-spacing:0.439px;text-indent:0.91px;transform:scaleX(1.05);">Oct 29 2025</span>
<span style="left:208.00px;top:152.00px;font-size:22px;letter-spacing:-0.115px;text-indent:0.05px;transform:scaleX(1.05);">Nov 1 2025</span>
<span style="left:380.00px;top:152.00px;font-size:22px;letter-spacing:0.104px;text-indent:0.66px;transform:scaleX(1.05);">2023 Springhill Youth Event</span>
<span style="left:36.00px;top:188.00px;font-size:22px;letter-spacing:0.125px;text-indent:0.91px;transform:scaleX(1.05);">Oct 18 2025</span>
<span style="left:208.00px;top:188.00px;font-size:22px;letter-spacing:0.134px;text-indent:0.82px;transform:scaleX(1.05);">Oct 18 2025</span>
<span style="left:381.00px;top:188.00px;font-size:22px;letter-spacing:0.140px;text-indent:0.33px;transform:scaleX(1.05);">Youth Community Service 2023</span>
<span style="left:37.00px;top:224.00px;font-size:22px;letter-spacing:0.009px;transform:scaleX(1.05);">Sep 27 2025</span>
<span style="left:208.00px;top:224.00px;font-size:22px;letter-spacing:0.019px;text-indent:0.86px;transform:scaleX(1.05);">Sep 27 2025</span>
<span style="left:380.00px;top:224.00px;font-size:22px;letter-spacing:0.222px;text-indent:0.66px;transform:scaleX(1.05);">2023 Church Picnic</span>
<span style="left:37.00px;top:260.00px;font-size:22px;letter-spacing:0.171px;text-indent:0.66px;transform:scaleX(1.05);">Jun 9 2025</span>
<span style="left:209.00px;top:260.00px;font-size:22px;letter-spacing:-0.155px;text-indent:0.56px;transform:scaleX(1.05);">Jun 21 2025</span>
<span style="left:381.00px;top:260.00px;font-size:22px;letter-spacing:0.159px;text-indent:0.77px;transform:scaleX(1.05);">Africa Mission Trip 2025</span>
<span style="left:37.00px;top:296.00px;font-size:22px;letter-spacing:0.172px;transform:scaleX(1.05);">Sep 28 2024</span>
<span style="left:208.00px;top:296.00px;font-size:22px;letter-spacing:0.181px;text-indent:0.86px;transform:scaleX(1.05);">Sep 28 2024</span>
<span style="left:379.00px;top:296.00px;font-size:22px;letter-spacing:0.022px;text-indent:0.91px;transform:scaleX(1.05);">Family Harvest Festival</span>
<span style="left:380.00px;top:332.00px;font-size:22px;letter-spacing:0.164px;text-indent:0.66px;transform:scaleX(1.05);">2024 Youth Community Service</span>
<span style="left:380.00px;top:368.00px;font-size:22px;letter-spacing:0.366px;text-indent:0.66px;transform:scaleX(1.05);">2024 Springhill</span>
<span style="left:380.00px;top:404.00px;font-size:22px;letter-spacing:0.021px;text-indent:0.66px;color:#fff;transform:scaleX(1.05);">2025 Fall Festival</span>
<span style="left:814.00px;top:68.00px;font-size:22px;letter-spacing:0.183px;text-indent:0.43px;transform:scaleX(1.05);">Registrants for 2025 Fall Festival (2 Current, 0 Cancelled)</span>
<span style="left:817.00px;top:112.00px;font-size:21.2px;letter-spacing:0.183px;text-indent:0.43px;font-weight:700;-webkit-text-stroke:0.45px;transform:scaleX(0.928081880574877);">*</span>
<span style="left:840.00px;top:112.00px;font-size:21.2px;letter-spacing:0.215px;text-indent:0.43px;font-weight:700;-webkit-text-stroke:0.45px;transform:scaleX(1.04);">Last</span>
<span style="left:1114.00px;top:112.00px;font-size:21.2px;letter-spacing:0.223px;text-indent:0.62px;font-weight:700;-webkit-text-stroke:0.45px;transform:scaleX(1.04);">First</span>
<span style="left:1368.00px;top:112.00px;font-size:21.2px;letter-spacing:0.688px;text-indent:0.62px;font-weight:700;-webkit-text-stroke:0.45px;transform:scaleX(1.04);">Date Registered</span>
<span style="left:841.00px;top:152.00px;font-size:22px;letter-spacing:-0.068px;text-indent:0.77px;transform:scaleX(1.05);">Austin</span>
<span style="left:1115.00px;top:152.00px;font-size:22px;letter-spacing:-0.200px;text-indent:0.25px;transform:scaleX(0.9968721549680518);">Glen</span>
<span style="left:1369.00px;top:152.00px;font-size:22px;letter-spacing:0.192px;transform:scaleX(1.05);">Sep 9 2025 4:27 PM</span>
<span style="left:841.00px;top:188.00px;font-size:22px;letter-spacing:-0.068px;text-indent:0.77px;transform:scaleX(1.05);">Austin</span>
<span style="left:1114.00px;top:188.00px;font-size:22px;letter-spacing:-0.089px;text-indent:0.43px;transform:scaleX(1.05);">David</span>
<span style="left:1369.00px;top:188.00px;font-size:22px;letter-spacing:0.304px;transform:scaleX(1.05);">Sep 9 2025 4:30 PM</span>
<span style="left:399.00px;top:510.00px;font-size:22px;letter-spacing:0.115px;text-indent:0.67px;transform:scaleX(1.05);">Registrant</span>
<span style="left:554.00px;top:510.00px;font-size:22px;letter-spacing:0.181px;text-indent:0.42px;transform:scaleX(1.05);">Contacts</span>
<span style="left:702.00px;top:510.00px;font-size:22px;letter-spacing:-0.077px;text-indent:0.03px;transform:scaleX(1.05);">User Fields</span>
<span style="left:871.00px;top:510.00px;font-size:22px;letter-spacing:0.235px;text-indent:0.82px;transform:scaleX(1.05);">Activities</span>
<span style="left:1015.00px;top:510.00px;font-size:22px;letter-spacing:-0.200px;text-indent:0.79px;transform:scaleX(1.0454451049622426);">Payments</span>
<span style="left:1166.00px;top:510.00px;font-size:22px;letter-spacing:0.128px;text-indent:0.82px;transform:scaleX(1.05);">Sent Notice</span>
<span style="left:74.00px;top:558.00px;font-size:22px;letter-spacing:0.091px;text-indent:0.02px;color:#2e2e2e;transform:scaleX(1.05);">Individual Record</span>
<span style="left:458.00px;top:594.00px;font-size:22px;letter-spacing:0.022px;text-indent:0.33px;color:#838383;transform:scaleX(1.05);">Select</span>
<span style="left:439.00px;top:620.00px;font-size:22px;letter-spacing:0.230px;text-indent:0.83px;color:#838383;transform:scaleX(1.05);">Individual</span>
<span style="left:466.00px;top:656.00px;font-size:22px;letter-spacing:-0.200px;text-indent:0.03px;color:#838383;transform:scaleX(1.0479253079803015);">Clear</span>
<span style="left:77.00px;top:792.00px;font-size:22px;letter-spacing:0.059px;text-indent:0.90px;transform:scaleX(1.05);">Phone Number:</span>
<span style="left:174.00px;top:854.00px;font-size:22px;letter-spacing:-0.200px;text-indent:0.36px;color:#2e2e2e;transform:scaleX(1.0011032632150172);">Fees</span>
<span style="left:224.00px;top:888.00px;font-size:22px;letter-spacing:-0.200px;text-indent:0.49px;transform:scaleX(1.038116306691209);">Camp Fee:</span>
<span style="left:419.00px;top:888.00px;font-size:22px;letter-spacing:-0.200px;text-indent:0.37px;transform:scaleX(1.0360593755726792);">0.00</span>
<span style="left:233.00px;top:918.00px;font-size:22px;letter-spacing:-0.145px;text-indent:0.69px;transform:scaleX(1.05);">Act. Fees:</span>
<span style="left:419.00px;top:918.00px;font-size:22px;letter-spacing:-0.200px;text-indent:0.37px;transform:scaleX(1.0360593755726792);">0.00</span>
<span style="left:170.00px;top:948.00px;font-size:22px;letter-spacing:-0.044px;text-indent:0.45px;transform:scaleX(1.05);">Processing Fee:</span>
<span style="left:419.00px;top:948.00px;font-size:22px;letter-spacing:-0.200px;text-indent:0.37px;transform:scaleX(1.0360593755726792);">0.00</span>
<span style="left:228.00px;top:978.00px;font-size:22px;letter-spacing:-0.067px;text-indent:0.17px;transform:scaleX(1.05);">Payments:</span>
<span style="left:419.00px;top:978.00px;font-size:22px;letter-spacing:-0.200px;text-indent:0.37px;transform:scaleX(1.0360593755726792);">0.00</span>
<span style="left:200.00px;top:1008.00px;font-size:22px;letter-spacing:-0.115px;text-indent:0.26px;transform:scaleX(1.05);">Balance Due:</span>
<span style="left:419.00px;top:1008.00px;font-size:22px;letter-spacing:-0.200px;text-indent:0.37px;transform:scaleX(1.0360593755726792);">0.00</span>
<span style="left:147.00px;top:1058.00px;font-size:22px;letter-spacing:-0.200px;text-indent:0.15px;transform:scaleX(1.0498782123869446);">Source:</span>
<span style="left:236.00px;top:1058.00px;font-size:22px;letter-spacing:-0.200px;text-indent:0.65px;transform:scaleX(1.0237828858744782);">Engage</span>
<span style="left:46.00px;top:1090.00px;font-size:22px;letter-spacing:0.161px;text-indent:0.68px;transform:scaleX(1.05);">Digital Signature:</span>
<span style="left:237.00px;top:1090.00px;font-size:22px;letter-spacing:0.157px;text-indent:0.06px;transform:scaleX(1.05);">Sep 9 2025 4:27 PM</span>
<span style="left:680.00px;top:562.00px;font-size:22px;letter-spacing:0.055px;text-indent:0.53px;transform:scaleX(1.05);">Date Registered:</span>
<span style="left:864.00px;top:564.00px;font-size:22px;letter-spacing:0.165px;text-indent:0.67px;transform:scaleX(1.05);">Sep 9 2025 4:27 PM</span>
<span style="left:1212.00px;top:562.00px;font-size:22px;letter-spacing:0.190px;text-indent:0.37px;transform:scaleX(1.05);">Registration Number:</span>
<span style="left:1530.00px;top:562.00px;font-size:22px;letter-spacing:0.190px;text-indent:1.35px;transform:scaleX(0.7081094066371562);">1</span>
<span style="left:894.00px;top:600.00px;font-size:22px;letter-spacing:0.199px;text-indent:0.10px;transform:scaleX(1.05);">Registration Canceled (*)</span>
<span style="left:1212.00px;top:600.00px;font-size:22px;letter-spacing:0.045px;text-indent:0.37px;transform:scaleX(1.05);">Date Canceled:</span>
<span style="left:645.00px;top:662.00px;font-size:22px;letter-spacing:0.071px;text-indent:0.86px;transform:scaleX(1.05);">First Name:</span>
<span style="left:780.00px;top:662.00px;font-size:22px;letter-spacing:-0.200px;text-indent:0.27px;transform:scaleX(1.0199478992960107);">Glen</span>
<span style="left:646.00px;top:702.00px;font-size:22px;letter-spacing:-0.033px;text-indent:0.48px;transform:scaleX(1.05);">Last Name:</span>
<span style="left:781.00px;top:702.00px;font-size:22px;letter-spacing:-0.049px;text-indent:0.34px;transform:scaleX(1.05);">Austin</span>
<span style="left:624.00px;top:744.00px;font-size:22px;letter-spacing:-0.147px;text-indent:0.39px;transform:scaleX(1.05);">Badge Name:</span>
<span style="left:780.00px;top:741.00px;font-size:22px;letter-spacing:-0.200px;text-indent:0.47px;transform:scaleX(1.0153327504304168);">Glen</span>
<span style="left:682.00px;top:788.00px;font-size:22px;letter-spacing:-0.079px;text-indent:0.51px;transform:scaleX(1.05);">Gender:</span>
<span style="left:782.00px;top:784.00px;font-size:22px;letter-spacing:-0.200px;text-indent:0.01px;transform:scaleX(1.0450914349198528);">Male</span>
<span style="left:1066.00px;top:658.00px;font-size:22px;letter-spacing:0.241px;text-indent:0.05px;transform:scaleX(1.05);">Social Security #:</span>
<span style="left:1154.00px;top:700.00px;font-size:22px;letter-spacing:0.362px;text-indent:0.29px;transform:scaleX(1.05);">Birthday:</span>
<span style="left:1264.00px;top:700.00px;font-size:22px;letter-spacing:-0.200px;text-indent:0.11px;transform:scaleX(1.0434829141688895);">Feb 2 2014</span>
<span style="left:1203.00px;top:742.00px;font-size:22px;letter-spacing:-0.200px;text-indent:0.35px;transform:scaleX(1.0210050518479075);">Age:</span>
<span style="left:1264.00px;top:744.00px;font-size:22px;letter-spacing:-0.200px;text-indent:0.10px;transform:scaleX(0.7899370155918068);">11</span>
<span style="left:1340.00px;top:742.00px;font-size:22px;letter-spacing:-0.200px;text-indent:0.90px;transform:scaleX(1.0362951162802696);">Grade:</span>
<span style="left:1429.00px;top:742.00px;font-size:22px;letter-spacing:-0.200px;text-indent:0.11px;transform:scaleX(0.9507224666853987);">5</span>
<span style="left:1438.00px;top:846.00px;font-size:22px;letter-spacing:-0.136px;text-indent:0.20px;color:#838383;transform:scaleX(1.05);">MapQuest</span>
<span style="left:673.00px;top:890.00px;font-size:22px;letter-spacing:-0.074px;text-indent:0.79px;transform:scaleX(1.05);">Address:</span>
<span style="left:716.00px;top:1009.00px;font-size:22px;letter-spacing:0.439px;text-indent:0.38px;transform:scaleX(1.05);">City:</span>
<span style="left:1096.00px;top:1009.00px;font-size:22px;letter-spacing:0.153px;text-indent:0.48px;transform:scaleX(1.05);">State:</span>
<span style="left:1265.00px;top:1009.00px;font-size:22px;letter-spacing:0.071px;text-indent:0.11px;transform:scaleX(1.05);">Zip Code:</span>
<span style="left:674.00px;top:1052.00px;font-size:22px;letter-spacing:0.346px;text-indent:0.57px;transform:scaleX(1.05);">Country:</span>
<span style="left:700.00px;top:1094.00px;font-size:22px;letter-spacing:-0.200px;text-indent:0.40px;transform:scaleX(1.0304331276088352);">Phone</span>
<span style="left:1028.00px;top:1094.00px;font-size:22px;letter-spacing:-0.200px;text-indent:0.47px;transform:scaleX(1.0353479821716618);">Email:</span>
<span style="left:1108.00px;top:1090.00px;font-size:22px;letter-spacing:-0.033px;text-indent:0.90px;transform:scaleX(1.05);">glen.austin@example.com</span>
<span style="left:73.00px;top:1204.00px;font-size:22px;letter-spacing:-0.200px;text-indent:0.20px;transform:scaleX(1.0192150535381261);">Add</span>
<span style="left:186.00px;top:1204.00px;font-size:22px;letter-spacing:0.575px;text-indent:0.28px;transform:scaleX(1.05);">Multi-Add</span>
<span style="left:342.00px;top:1204.00px;font-size:22px;letter-spacing:-0.200px;text-indent:0.41px;transform:scaleX(1.0438633384570404);">Change</span>
<span style="left:473.00px;top:1204.00px;font-size:22px;letter-spacing:0.078px;text-indent:0.74px;transform:scaleX(1.05);">Delete</span>
<span style="left:623.00px;top:1204.00px;font-size:22px;letter-spacing:0.102px;text-indent:0.74px;transform:scaleX(1.05);">Print</span>
<span style="left:753.00px;top:1204.00px;font-size:22px;letter-spacing:-0.200px;text-indent:0.70px;color:#838383;transform:scaleX(1.039302251099234);">Address</span>
<span style="left:1376.00px;top:1204.00px;font-size:22px;letter-spacing:-0.048px;text-indent:0.15px;color:#838383;transform:scaleX(1.05);">Cancel</span>
<span style="left:1512.00px;top:1204.00px;font-size:22px;letter-spacing:-0.200px;text-indent:0.44px;color:#838383;transform:scaleX(0.9950978326922113);">Save</span>
</div></body></html>
